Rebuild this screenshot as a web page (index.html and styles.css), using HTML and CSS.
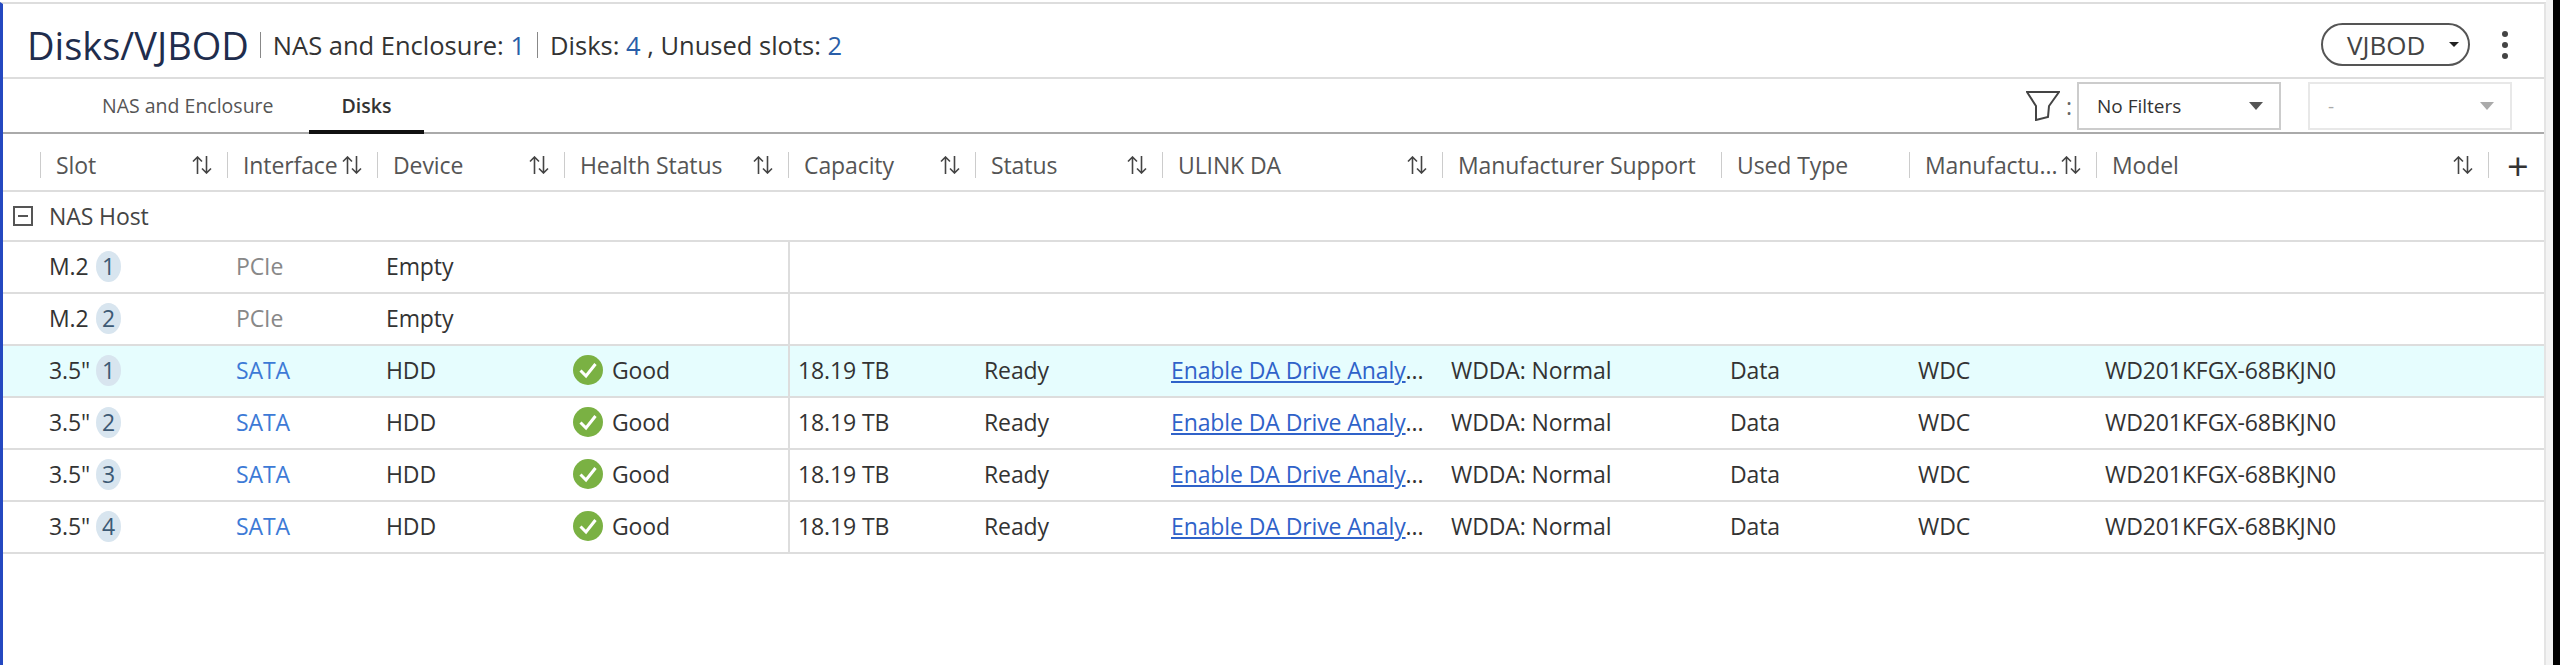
FILE: index.html
```html
<!DOCTYPE html>
<html lang="en">
  <head>
    <meta charset="UTF-8" />
    <meta name="viewport" content="width=device-width, initial-scale=1.0" />
    <title>Disks/VJBOD</title>
    <link rel="stylesheet" href="styles.css">
  </head>
  <body>
    <svg class="sprites" width="0" height="0">
      <symbol id="sort" viewBox="0 0 20 18">
        <path d="M5.5 18V1M1 5.5 5.5 1 10 5.5M14.5 0V17M10 12.5 14.5 17 19 12.5" fill="none" stroke="#444" stroke-width="1.6" />
      </symbol>
      <symbol id="good" viewBox="0 0 30 30">
        <circle cx="15" cy="15" r="15" fill="#7ab143" />
        <path d="M7.5 15.5 13 21 22.5 9" fill="none" stroke="#fff" stroke-width="3" />
      </symbol>
    </svg>

    <div class="frame">
      <div class="panel">
        <header class="top-bar">
          <h1>Disks/VJBOD</h1>
          <div class="summary">
            <span class="part">NAS and Enclosure: <b>1</b></span>
            <span class="part">Disks: <b>4</b> , Unused slots: <b>2</b></span>
          </div>
          <button class="pill">VJBOD <i class="caret"></i></button>
          <div class="more"><i></i><i></i><i></i></div>
        </header>

        <nav class="tab-bar">
          <a class="tab">NAS and Enclosure</a>
          <a class="tab active">Disks</a>
          <svg class="funnel" viewBox="0 0 34 30">
            <path d="M1 1H33L23 15 22 26 10 29 10 15Z" fill="none" stroke="#444" stroke-width="2" />
          </svg>
          <span class="colon">:</span>
          <div class="select"><span>No Filters</span><i class="arrow"></i></div>
          <div class="select disabled"><span>-</span><i class="arrow"></i></div>
        </nav>

        <div class="row head">
          <div></div>
          <div class="th">Slot <svg class="sort"><use href="#sort" /></svg></div>
          <div class="th">Interface <svg class="sort"><use href="#sort" /></svg></div>
          <div class="th">Device <svg class="sort"><use href="#sort" /></svg></div>
          <div class="th">Health Status <svg class="sort"><use href="#sort" /></svg></div>
          <div class="th">Capacity <svg class="sort"><use href="#sort" /></svg></div>
          <div class="th">Status <svg class="sort"><use href="#sort" /></svg></div>
          <div class="th">ULINK DA <svg class="sort"><use href="#sort" /></svg></div>
          <div class="th">Manufacturer Support</div>
          <div class="th">Used Type</div>
          <div class="th">Manufactu... <svg class="sort"><use href="#sort" /></svg></div>
          <div class="th">Model <svg class="sort"><use href="#sort" /></svg></div>
          <div class="th add">+</div>
        </div>

        <div class="group"><span class="toggle"></span>NAS Host</div>

        <div class="row">
          <div></div>
          <div class="td"><span class="slot">M.2</span><span class="badge">1</span></div>
          <div class="td muted">PCIe</div>
          <div class="td">Empty</div>
          <div class="td"></div>
          <div class="td divider"></div>
        </div>
        <div class="row">
          <div></div>
          <div class="td"><span class="slot">M.2</span><span class="badge">2</span></div>
          <div class="td muted">PCIe</div>
          <div class="td">Empty</div>
          <div class="td"></div>
          <div class="td divider"></div>
        </div>
        <div class="row selected">
          <div></div>
          <div class="td"><span class="slot">3.5"</span><span class="badge">1</span></div>
          <div class="td sata">SATA</div>
          <div class="td">HDD</div>
          <div class="td"><svg class="good"><use href="#good" /></svg>Good</div>
          <div class="td divider">18.19 TB</div>
          <div class="td">Ready</div>
          <div class="td"><a class="link">Enable DA Drive Analy</a>...</div>
          <div class="td">WDDA: Normal</div>
          <div class="td">Data</div>
          <div class="td">WDC</div>
          <div class="td">WD201KFGX-68BKJN0</div>
        </div>
        <div class="row">
          <div></div>
          <div class="td"><span class="slot">3.5"</span><span class="badge">2</span></div>
          <div class="td sata">SATA</div>
          <div class="td">HDD</div>
          <div class="td"><svg class="good"><use href="#good" /></svg>Good</div>
          <div class="td divider">18.19 TB</div>
          <div class="td">Ready</div>
          <div class="td"><a class="link">Enable DA Drive Analy</a>...</div>
          <div class="td">WDDA: Normal</div>
          <div class="td">Data</div>
          <div class="td">WDC</div>
          <div class="td">WD201KFGX-68BKJN0</div>
        </div>
        <div class="row">
          <div></div>
          <div class="td"><span class="slot">3.5"</span><span class="badge">3</span></div>
          <div class="td sata">SATA</div>
          <div class="td">HDD</div>
          <div class="td"><svg class="good"><use href="#good" /></svg>Good</div>
          <div class="td divider">18.19 TB</div>
          <div class="td">Ready</div>
          <div class="td"><a class="link">Enable DA Drive Analy</a>...</div>
          <div class="td">WDDA: Normal</div>
          <div class="td">Data</div>
          <div class="td">WDC</div>
          <div class="td">WD201KFGX-68BKJN0</div>
        </div>
        <div class="row">
          <div></div>
          <div class="td"><span class="slot">3.5"</span><span class="badge">4</span></div>
          <div class="td sata">SATA</div>
          <div class="td">HDD</div>
          <div class="td"><svg class="good"><use href="#good" /></svg>Good</div>
          <div class="td divider">18.19 TB</div>
          <div class="td">Ready</div>
          <div class="td"><a class="link">Enable DA Drive Analy</a>...</div>
          <div class="td">WDDA: Normal</div>
          <div class="td">Data</div>
          <div class="td">WDC</div>
          <div class="td">WD201KFGX-68BKJN0</div>
        </div>
      </div>
    </div>
  </body>
</html>
```

FILE: styles.css
```css
html,
body {
  height: 100%;
}
body {
  margin: 0;
  background-color: black;
  font-family: "Open Sans", "Noto Sans", sans-serif;
  font-size: 23px;
  letter-spacing: -0.1px;
  color: #333;
  overflow: hidden;
}
.sprites {
  position: absolute;
}
.frame {
  width: 2553px;
  height: 100%;
  box-sizing: border-box;
  padding-top: 2px;
  background-color: white;
  border-right: 7px solid #f3f3f3;
}
.panel {
  height: 100%;
  box-sizing: border-box;
  border-top: 2px solid #ddd;
  border-left: 3px solid #2448c0;
  border-right: 2px solid #e4e4e4;
}

/* title bar */
.top-bar {
  height: 75px;
  box-sizing: border-box;
  border-bottom: 2px solid #ddd;
  padding: 8px 36px 0 24px;
  display: flex;
  align-items: center;
}
h1 {
  margin: 0;
  font-size: 38px;
  font-weight: 500;
  letter-spacing: 0;
  color: #1f2d4d;
}
.summary {
  flex: 1;
  display: flex;
  font-size: 25.5px;
  letter-spacing: 0;
  margin-left: 11px;
}
.part {
  border-left: 1px solid #888;
  padding: 0 12px;
  line-height: 26px;
}
.part b {
  font-weight: 400;
  color: #2a5ea8;
}
.pill {
  width: 149px;
  height: 43px;
  box-sizing: border-box;
  border: 2px solid #555;
  border-radius: 22px;
  background: white;
  padding: 0 9px 0 24px;
  font: inherit;
  font-size: 26px;
  letter-spacing: 0;
  color: #444;
  display: flex;
  align-items: center;
  justify-content: space-between;
}
.caret {
  border: 5px solid transparent;
  border-top: 5px solid #222;
  border-bottom: 0;
}
.more {
  margin-left: 32px;
  display: flex;
  flex-direction: column;
  gap: 5px;
}
.more i {
  width: 6px;
  height: 6px;
  border-radius: 50%;
  background-color: #444;
}

/* tabs and filters */
.tab-bar {
  height: 55px;
  box-sizing: border-box;
  border-bottom: 2px solid #aaa;
  padding: 0 32px 0 0;
  display: flex;
  align-items: center;
}
.tab {
  height: 53px;
  box-sizing: border-box;
  display: flex;
  align-items: center;
  font-size: 19.5px;
  letter-spacing: 0;
  color: #555;
}
.tab:first-child {
  margin-left: 99px;
}
.tab.active {
  margin: 0 auto -2px 35px;
  padding: 2px 33px 0;
  height: 55px;
  font-weight: 600;
  color: #333;
  border-bottom: 4px solid #111;
}
.funnel {
  width: 34px;
  height: 30px;
}
.colon {
  margin: 0 5px 0 6px;
  color: #666;
}
.select {
  width: 204px;
  height: 48px;
  box-sizing: border-box;
  border: 2px solid #ccc;
  padding: 0 16px 0 18px;
  display: flex;
  align-items: center;
  justify-content: space-between;
  font-size: 19px;
  letter-spacing: 0;
}
.select.disabled {
  margin-left: 27px;
  border-color: #e8e8e8;
  color: #aaa;
}
.arrow {
  border: 7px solid transparent;
  border-top: 8px solid #555;
  border-bottom: 0;
}
.select.disabled .arrow {
  border-top-color: #aaa;
}

/* table */
.row {
  height: 52px;
  box-sizing: border-box;
  border-bottom: 2px solid #ddd;
  display: grid;
  grid-template-columns: 37px 187px 150px 187px 224px 187px 187px 280px 279px 188px 187px 392px 56px;
}
.row.head {
  height: 58px;
  color: #555;
}
.row.selected {
  background-color: #e6fdfe;
}
.th {
  height: 26px;
  margin: 18px 0 12px;
  border-left: 1px solid #ccc;
  padding: 0 15px;
  display: flex;
  align-items: center;
  justify-content: space-between;
  white-space: nowrap;
}
.sort {
  width: 20px;
  height: 18px;
}
.add {
  font-size: 38px;
  line-height: 20px;
  color: #333;
  padding: 0 18px;
}
.group {
  height: 50px;
  box-sizing: border-box;
  border-bottom: 2px solid #ddd;
  padding-left: 10px;
  display: flex;
  align-items: center;
  gap: 16px;
  color: #444;
}
.toggle {
  width: 20px;
  height: 20px;
  box-sizing: border-box;
  border: 2px solid #555;
  display: flex;
  align-items: center;
  justify-content: center;
}
.toggle::before {
  content: "";
  width: 10px;
  height: 2px;
  background-color: #555;
}
.td {
  padding: 0 0 2px 9px;
  display: flex;
  align-items: center;
  white-space: nowrap;
}
.td.divider {
  border-left: 2px solid #ddd;
  padding-left: 8px;
}
.slot {
  width: 47px;
}
.badge {
  width: 25px;
  height: 31px;
  border-radius: 50%;
  background-color: #d8e5ef;
  color: #3d5a75;
  display: flex;
  align-items: center;
  justify-content: center;
}
.muted {
  color: #888;
}
.sata {
  color: #3d7ad6;
}
.good {
  width: 30px;
  height: 30px;
  margin-right: 9px;
}
.link {
  color: #2f62c9;
  text-decoration: underline;
}
```
